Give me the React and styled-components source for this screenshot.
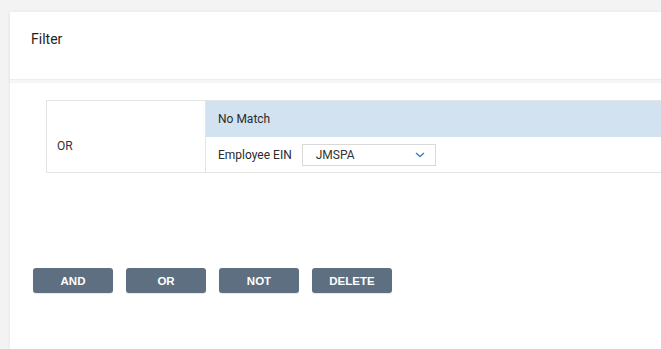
import React from 'react';
import styled, { createGlobalStyle } from 'styled-components';

const GlobalStyle = createGlobalStyle`
  html, body {
    margin: 0;
    padding: 0;
    background: #f3f3f3;
    font-family: Roboto, "Liberation Sans", Arial, sans-serif;
    overflow: hidden;
  }
`;

const Page = styled.div`
  height: 349px;
  padding: 12px 0 0 10px;
  box-sizing: border-box;
`;

const Card = styled.div`
  height: 100%;
  background: #fff;
  box-shadow: 0 0 4px rgba(0, 0, 0, 0.06);
  display: flex;
  flex-direction: column;
`;

const Header = styled.div`
  height: 68px;
  box-sizing: border-box;
  padding: 19px 0 0 21px;
  font-size: 14px;
  line-height: 16px;
  color: #1f1f1f;
  border-bottom: 1px solid #ececec;
  box-shadow: 0 2px 3px rgba(0, 0, 0, 0.05);
`;

const Body = styled.div`
  flex: 1;
  padding: 17px 0 0 23px;
  border-top: 3px solid #f6f6f6;
`;

const Table = styled.div`
  margin-left: 13px;
  display: grid;
  grid-template-columns: 159px 1fr;
  border: 1px solid #e4e4e4;
  border-right: none;
`;

const OpCell = styled.div`
  display: flex;
  align-items: center;
  padding: 18px 0 0 10px;
  font-size: 12px;
  color: #333;
  border-right: 1px solid #e4e4e4;
`;

const Rules = styled.div`
  display: flex;
  flex-direction: column;
`;

const RuleHead = styled.div`
  height: 36px;
  display: flex;
  align-items: center;
  padding-left: 12px;
  background: #d3e2f0;
  font-size: 12px;
  color: #2b2b2b;
`;

const RuleRow = styled.div`
  height: 35px;
  display: flex;
  align-items: center;
  padding-left: 12px;
  font-size: 12px;
  color: #2b2b2b;
  gap: 10px;
`;

const Select = styled.div`
  width: 134px;
  height: 22px;
  box-sizing: border-box;
  border: 1px solid #d9d9d9;
  display: flex;
  align-items: center;
  justify-content: space-between;
  padding: 0 10px 0 13px;
  font-size: 12px;
  color: #333;
`;

const Actions = styled.div`
  display: flex;
  gap: 13px;
  margin-top: 95px;
`;

const Button = styled.button`
  width: 80px;
  height: 25px;
  border: none;
  border-radius: 3px;
  background: #5e6f81;
  color: #fff;
  font-family: "Liberation Sans", Arial, sans-serif;
  font-weight: 700;
  font-size: 11.5px;
  padding: 0;
  box-shadow: 0 1px 1px rgba(0, 0, 0, 0.1);
`;

const Chevron = () => (
  <svg width="10" height="6" viewBox="0 0 10 6" fill="none">
    <path d="M1 1l4 3.5L9 1" stroke="#3d82c4" strokeWidth="1.4" />
  </svg>
);

export default function App() {
  return (
    <>
      <GlobalStyle />
      <Page>
        <Card>
          <Header>Filter</Header>
          <Body>
            <Table>
              <OpCell>OR</OpCell>
              <Rules>
                <RuleHead>No Match</RuleHead>
                <RuleRow>
                  Employee EIN
                  <Select>
                    JMSPA
                    <Chevron />
                  </Select>
                </RuleRow>
              </Rules>
            </Table>
            <Actions>
              {['AND', 'OR', 'NOT', 'DELETE'].map((label) => (
                <Button key={label}>{label}</Button>
              ))}
            </Actions>
          </Body>
        </Card>
      </Page>
    </>
  );
}
